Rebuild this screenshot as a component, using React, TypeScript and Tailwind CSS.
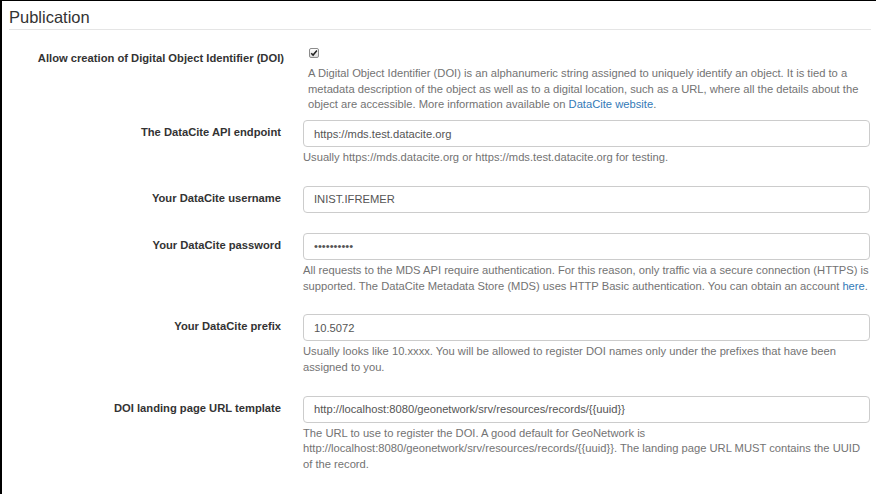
import React from "react"

const font = { fontFamily: '"Liberation Sans", Arial, Helvetica, sans-serif' }

function Label({ children }: { children: React.ReactNode }) {
  return (
    <div className="w-[282px] shrink-0 pr-[3px] pt-[4px] text-right text-[11.2px] leading-4 font-bold text-[#333]">
      {children}
    </div>
  )
}

function Help({ children }: { children: React.ReactNode }) {
  return <p className="mt-[3px] text-[11.2px] leading-[15.7px] text-[#737373]">{children}</p>
}

function Field({
  label,
  value,
  help,
  className,
}: {
  label: string
  value: string
  help?: React.ReactNode
  className?: string
}) {
  return (
    <div className={"flex " + (className ?? "")}>
      <Label>{label}</Label>
      <div className="ml-[19px] flex-1">
        <input
          readOnly
          value={value}
          className="block h-[27px] w-full rounded-[4px] border border-[#ccc] bg-white px-[10px] text-[11.2px] text-[#555] outline-none"
          style={font}
        />
        {help && <Help>{help}</Help>}
      </div>
    </div>
  )
}

export default function App() {
  return (
    <div
      className="h-[494px] w-[876px] overflow-hidden border-l-2 border-t border-black bg-white pr-[6px]"
      style={font}
    >
      {/* Legend */}
      <div className="ml-[7px] mr-[-1px] border-b border-[#e5e5e5] pt-[4px] text-[16.5px] leading-[24px] text-[#333]">
        Publication
      </div>

      {/* DOI checkbox */}
      <div className="mt-[20px] flex">
        <div className="w-[282px] shrink-0 text-right text-[11.2px] leading-4 font-bold text-[#333]">
          Allow creation of Digital Object Identifier (DOI)
        </div>
        <div className="ml-[19px] flex-1 pl-[5px] -mt-[2px]">
          <span className="ml-[1px] flex h-[10px] w-[10px] items-center justify-center rounded-[2px] border border-[#8c8c8c] bg-gradient-to-b from-white to-[#dcdcdc]">
            <svg width="8" height="8" viewBox="0 0 8 8">
              <path d="M1.2 4.2 L3.1 6.1 L6.9 1.6" fill="none" stroke="#222" strokeWidth="1.5" />
            </svg>
          </span>
          <p className="mt-[8px] text-[11.2px] leading-[15.7px] text-[#737373]">
            A Digital Object Identifier (DOI) is an alphanumeric string assigned to uniquely identify an object. It is
            tied to a metadata description of the object as well as to a digital location, such as a URL, where all
            the details about the object are accessible. More information available on{" "}
            <a className="text-[#337ab7]">DataCite website</a>.
          </p>
        </div>
      </div>

      <Field
        className="mt-[7px]"
        label="The DataCite API endpoint"
        value="https://mds.test.datacite.org"
        help="Usually https://mds.datacite.org or https://mds.test.datacite.org for testing."
      />

      <Field className="mt-[20px]" label="Your DataCite username" value="INIST.IFREMER" />

      <Field
        className="mt-[20px]"
        label="Your DataCite password"
        value="••••••••••"
        help={
          <>
            All requests to the MDS API require authentication. For this reason, only traffic via a secure connection
            (HTTPS) is supported. The DataCite Metadata Store (MDS) uses HTTP Basic authentication. You can obtain an
            account <a className="text-[#337ab7]">here</a>.
          </>
        }
      />

      <Field
        className="mt-[20px]"
        label="Your DataCite prefix"
        value="10.5072"
        help="Usually looks like 10.xxxx. You will be allowed to register DOI names only under the prefixes that have been assigned to you."
      />

      <Field
        className="mt-[20px]"
        label="DOI landing page URL template"
        value="http://localhost:8080/geonetwork/srv/resources/records/{{uuid}}"
        help="The URL to use to register the DOI. A good default for GeoNetwork is http://localhost:8080/geonetwork/srv/resources/records/{{uuid}}. The landing page URL MUST contains the UUID of the record."
      />
    </div>
  )
}
